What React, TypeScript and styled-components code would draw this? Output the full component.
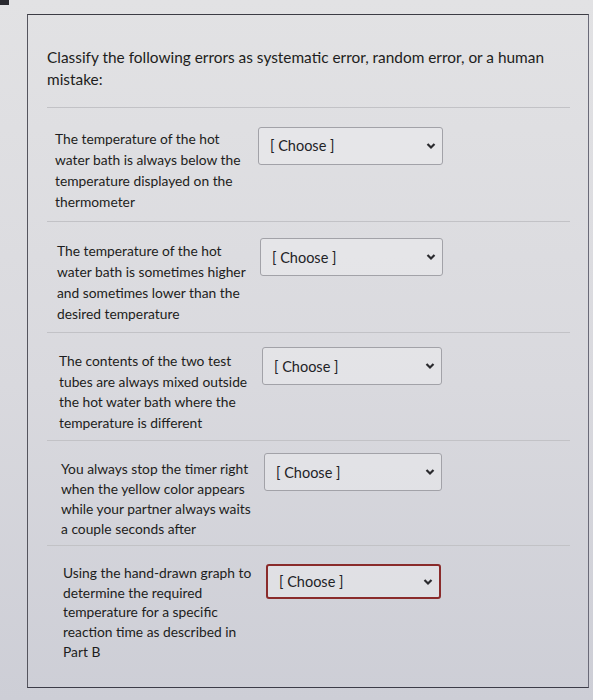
import React from "react";
import styled, { createGlobalStyle } from "styled-components";

const Global = createGlobalStyle`
  html, body {
    margin: 0;
    padding: 0;
    width: 593px;
    height: 700px;
    overflow: hidden;
    background: linear-gradient(180deg, #e2e2e4 0%, #d9d9de 55%, #cdced6 100%);
    font-family: Lato, "Open Sans", "Liberation Sans", sans-serif;
    color: #1d1d1f;
  }
`;

const Screen = styled.div`
  position: relative;
  width: 593px;
  height: 700px;
  padding: 14px 4px 12px 27px;
  box-sizing: border-box;
`;

const Corner = styled.div`
  position: absolute;
  left: 0;
  top: 0;
  width: 9px;
  height: 5px;
  background: #2a2a30;
`;

const Panel = styled.div`
  height: 100%;
  box-sizing: border-box;
  border-top: 1.5px solid #3c3c44;
  border-left: 1px solid #55555e;
  border-bottom: 1.5px solid #3c3c48;
  border-right: 1px solid #6a6a78;
  padding: 30.5px 18px 0 19px;
`;

const Title = styled.div`
  font-size: 15.4px;
  line-height: 22px;
  color: #1d1d20;
  padding-bottom: 17px;
  border-bottom: 1px solid #c2c2c6;
`;

const Row = styled.div<{ $last?: boolean; $shift: number; $pt: number; $pb: number }>`
  display: flex;
  align-items: flex-start;
  gap: 7px;
  padding: ${(p) => p.$pt}px 0 ${(p) => (p.$last ? 0 : p.$pb)}px ${(p) => p.$shift}px;
  border-bottom: ${(p) => (p.$last ? "none" : "1px solid #c2c2c6")};
`;

const Prompt = styled.div<{ $lh: number }>`
  width: 196px;
  flex: none;
  font-size: 13.8px;
  line-height: ${(p) => p.$lh}px;
  color: #1d1d20;
`;

const Select = styled.div<{ $active?: boolean; $w: number; $mt: number }>`
  width: ${(p) => p.$w}px;
  height: ${(p) => (p.$active ? "35px" : "38px")};
  box-sizing: border-box;
  display: flex;
  align-items: center;
  justify-content: space-between;
  padding: 0 6px 0 11px;
  margin-top: ${(p) => p.$mt}px;
  border: ${(p) => (p.$active ? "2px solid #8a2b2b" : "1px solid #a2a2a8")};
  border-radius: 3px;
  background: rgba(238, 238, 240, 0.5);
  font-size: 14.5px;
  color: #222226;
`;

const Chevron = () => (
  <svg width="10" height="8" viewBox="0 0 10 8">
    <path d="M1.5 2 L5 5.5 L8.5 2" fill="none" stroke="#2a2a2e" strokeWidth="2.2" />
  </svg>
);

const rows = [
  "The temperature of the hot water bath is always below the temperature displayed on the thermometer",
  "The temperature of the hot water bath is sometimes higher and sometimes lower than the desired temperature",
  "The contents of the two test tubes are always mixed outside the hot water bath where the temperature is different",
  "You always stop the timer right when the yellow color appears while your partner always waits a couple seconds after",
  "Using the hand-drawn graph to determine the required temperature for a specific reaction time as described in Part B",
];

export default function App() {
  return (
    <Screen>
      <Global />
      <Corner />
      <Panel>
        <Title>
          Classify the following errors as systematic error, random error, or a human mistake:
        </Title>
        {rows.map((t, i) => {
          const last = i === rows.length - 1;
          return (
            <Row
              key={i}
              $last={last}
              $shift={8 + i * 2}
              $pt={20 - i * 0.8}
              $pb={8 - i * 0.6}
            >
              <Prompt $lh={21.3 - i * 0.4}>{t}</Prompt>
              <Select $active={last} $w={185 - i * 2.5} $mt={last ? 1 : -1 - i * 1.5}>
                <span>[ Choose ]</span>
                <Chevron />
              </Select>
            </Row>
          );
        })}
      </Panel>
    </Screen>
  );
}
